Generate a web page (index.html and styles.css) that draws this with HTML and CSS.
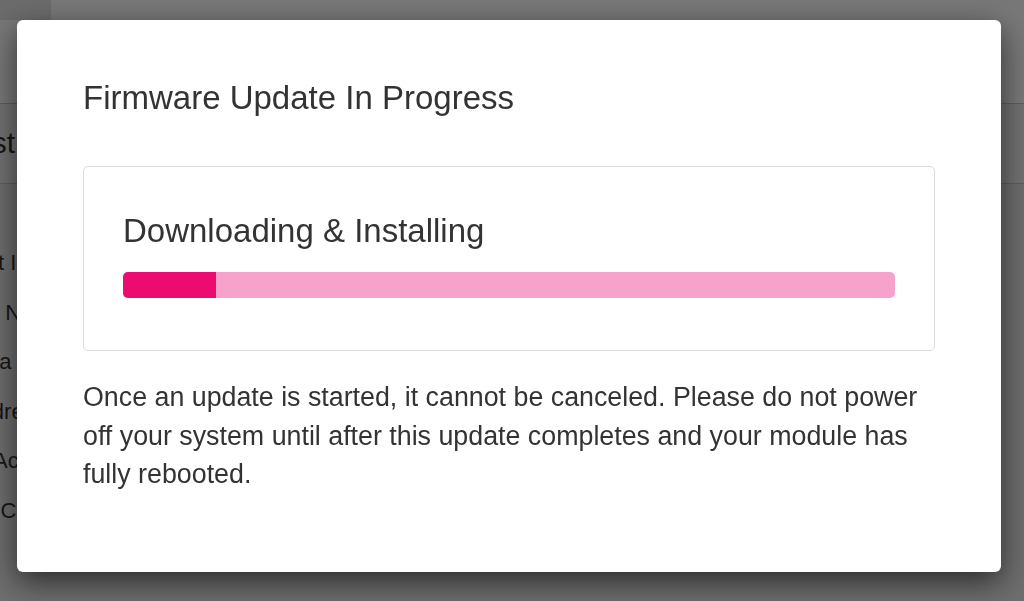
FILE: index.html
```html
<!DOCTYPE html>
<html lang="en">
<head>
    <meta charset="UTF-8">
    <meta name="viewport" content="width=device-width, initial-scale=1.0">
    <title>Firmware Update</title>
    <link rel="stylesheet" href="styles.css">
</head>
<body>
    <div class="app">
        <header class="topbar">
            <div class="brand"></div>
        </header>
        <div class="toolbar">
            <div class="toolbar-title">Robot List</div>
        </div>
        <div class="details">
            <div class="detail-labels">
                <div class="detail-label">Robot Index</div>
                <div class="detail-label">Name</div>
                <div class="detail-label">Data Rate</div>
                <div class="detail-label">Address 1</div>
                <div class="detail-label">Access</div>
                <div class="detail-label">Codec</div>
            </div>
        </div>
    </div>

    <div class="backdrop">
        <div class="modal">
            <h4 class="modal-title">Firmware Update In Progress</h4>
            <div class="progress-card">
                <h3 class="progress-label">Downloading &amp; Installing</h3>
                <div class="progress">
                    <div class="progress-bar" style="width: 12%;"></div>
                </div>
            </div>
            <p class="modal-note">Once an update is started, it cannot be canceled. Please do not power off your system until after this update completes and your module has fully rebooted.</p>
        </div>
    </div>
</body>
</html>
```

FILE: styles.css
```css
html, body {
    height: 100%;
}
body {
    margin: 0;
    overflow: hidden;
    font-family: "Liberation Sans", Arial, sans-serif;
    color: #333;
    background: #e9e9e9;
}
.app {
    height: 100%;
    display: flex;
    flex-direction: column;
}
.topbar {
    height: 103px;
    background: #fff;
    border-bottom: 1px solid #c6c6c6;
}
.brand {
    width: 51px;
    height: 20px;
    background: #e5e5e5;
}
.toolbar {
    height: 58px;
    padding-top: 21px;
    background: #f2f2f2;
    border-bottom: 1px solid #c6c6c6;
}
.toolbar-title {
    width: 200px;
    margin-left: -185px;
    text-align: right;
    white-space: nowrap;
    font-size: 30px;
    line-height: 36px;
}
.details {
    flex: 1;
    padding-top: 54px;
}
.detail-labels {
    width: 200px;
    margin-left: -136px;
    text-align: right;
}
.detail-label {
    white-space: nowrap;
    font-size: 22px;
    line-height: 49.5px;
}

/* modal */
.backdrop {
    position: fixed;
    inset: 0;
    padding: 20px 23px 0 17px;
    background: rgba(0, 0, 0, 0.533);
}
.modal {
    padding: 58px 66px 78px;
    background: #fff;
    border-radius: 6px;
    box-shadow: 0 10px 30px rgba(0, 0, 0, 0.6);
}
.modal-title {
    margin: 0 0 48px;
    font-size: 33px;
    line-height: 40px;
    font-weight: normal;
}
.progress-card {
    padding: 44px 39px 52px;
    border: 1px solid #dcdcdc;
    border-radius: 5px;
}
.progress-label {
    margin: 0 0 21px;
    font-size: 33px;
    line-height: 40px;
    font-weight: normal;
}
.progress {
    height: 26px;
    background: #f7a2cb;
    border-radius: 5px;
    overflow: hidden;
}
.progress-bar {
    height: 100%;
    background: #ec0b70;
}
.modal-note {
    margin: 27px 0 0;
    font-size: 26.8px;
    line-height: 38.5px;
}
```
